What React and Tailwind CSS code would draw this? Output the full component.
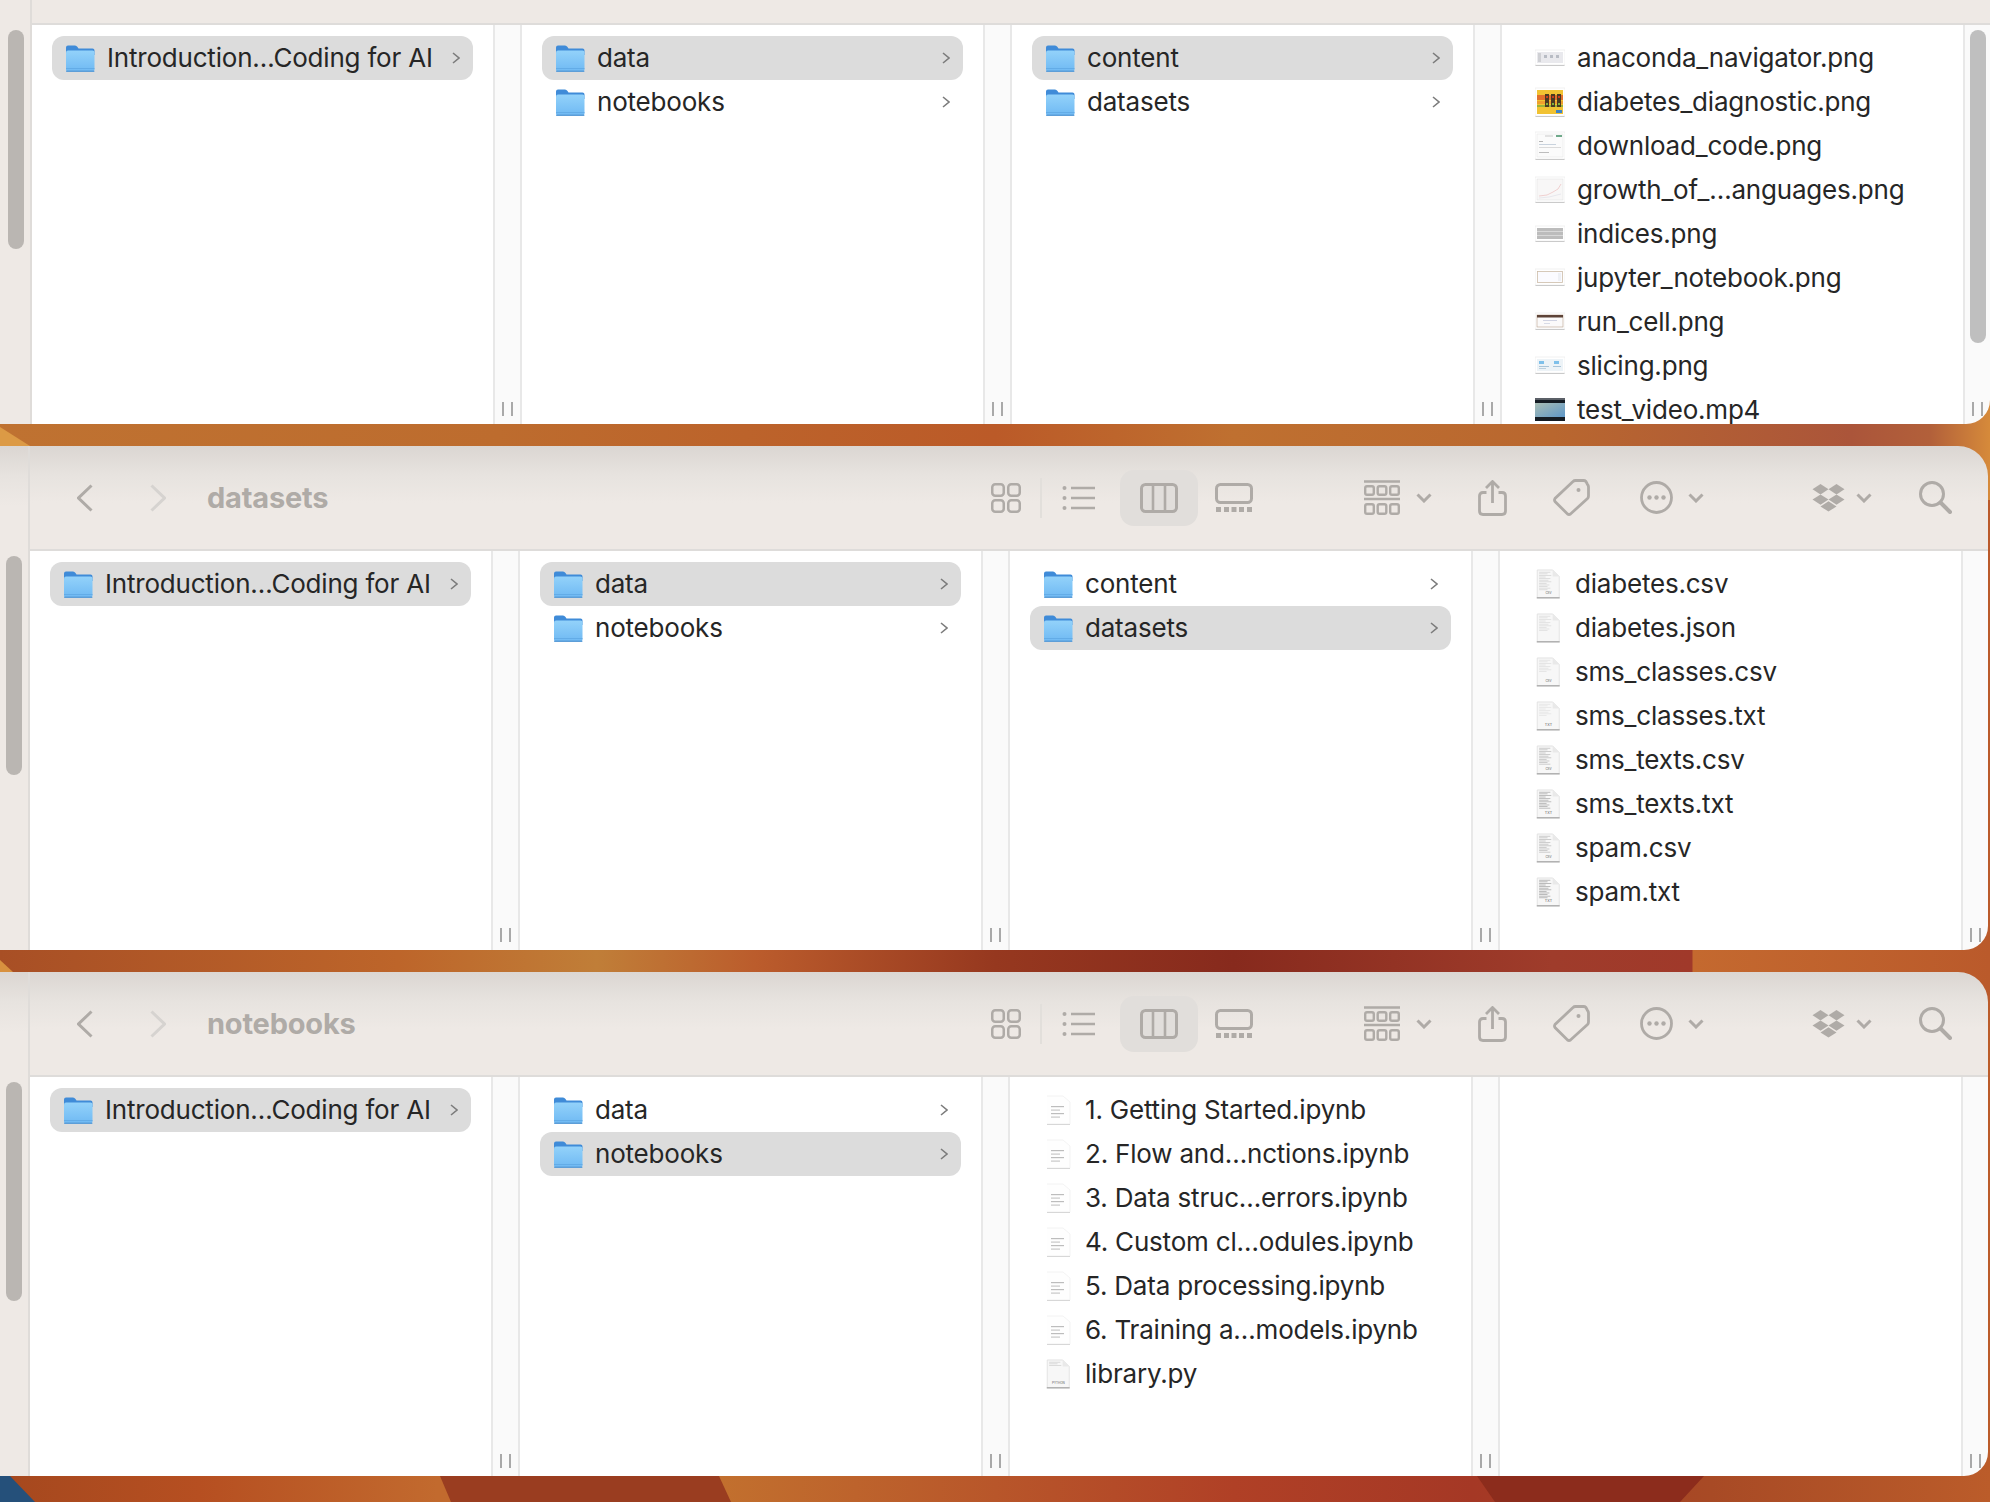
import React from "react";

const Ic = "#afaba7";

function Folder() {
  return (
    <svg width="30" height="30" viewBox="0 0 30 30" className="shrink-0">
      <defs>
        <linearGradient id="fb" x1="0" y1="0" x2="0" y2="1">
          <stop offset="0" stopColor="#93d2fa" />
          <stop offset="1" stopColor="#6fb9f3" />
        </linearGradient>
      </defs>
      <path d="M1 4.5 Q1 2.5 3 2.5 H10 Q11.5 2.5 12.5 4 L13.5 5.5 H27.5 Q29.5 5.5 29.5 7.5 V12 H1 Z" fill="#3f8bd8" />
      <rect x="1" y="7.5" width="28.5" height="21" rx="2" fill="url(#fb)" />
      <rect x="1" y="25" width="28.5" height="0.8" fill="#5fa8e4" />
      <rect x="1" y="27.6" width="28.5" height="1.4" rx="0.7" fill="#5d9ed8" />
    </svg>
  );
}

function Chevron() {
  return (
    <svg width="8" height="12" viewBox="0 0 8 12" className="shrink-0">
      <polyline points="1,1 7,6 1,11" fill="none" stroke="#7c7c7c" strokeWidth="1.6" />
    </svg>
  );
}

function Thumb({ y, h, children, border = "#ffffff" }) {
  return (
    <svg width="30" height="30" viewBox="0 0 30 30" className="shrink-0">
      <rect x="0.5" y={y + 1} width="29" height={h} fill="#a8a8a8" opacity="0.7" />
      <rect x="0" y={y} width="30" height={h} fill={border} stroke="#e4e4e4" strokeWidth="0.5" />
      {children}
    </svg>
  );
}

const thumbs = {
  anaconda: (
    <Thumb y={7} h={15}>
      <rect x="2" y="9" width="26" height="11" fill="#e9e9ed" />
      <rect x="3" y="10" width="3" height="9" fill="#cfd0d4" />
      <rect x="9" y="12" width="3" height="3" fill="#b8bcc4" />
      <rect x="15" y="12" width="3" height="3" fill="#b8bcc4" />
      <rect x="21" y="12" width="3" height="3" fill="#b8bcc4" />
    </Thumb>
  ),
  diabetes: (
    <Thumb y={1} h={28}>
      <rect x="2" y="3" width="26" height="24" fill="#f1c232" />
      <rect x="2" y="8" width="26" height="5" fill="#e2702c" />
      <rect x="2" y="14" width="26" height="3" fill="#ee9f2e" />
      <rect x="2" y="18" width="26" height="2" fill="#9bb33a" />
      <rect x="10" y="7" width="4" height="13" fill="#4a3a22" />
      <rect x="16" y="7" width="4" height="13" fill="#4a3a22" />
      <rect x="22" y="7" width="4" height="13" fill="#4a3a22" />
      <rect x="11" y="9" width="2" height="2" fill="#c93a22" />
      <rect x="17" y="9" width="2" height="2" fill="#c93a22" />
      <rect x="23" y="9" width="2" height="2" fill="#c93a22" />
      <rect x="11" y="16" width="2" height="2" fill="#7eb13e" />
      <rect x="17" y="16" width="2" height="2" fill="#7eb13e" />
      <rect x="23" y="16" width="2" height="2" fill="#7eb13e" />
      <rect x="21" y="23" width="6" height="3" fill="#3d83c9" />
    </Thumb>
  ),
  download: (
    <Thumb y={1} h={27}>
      <rect x="2" y="3" width="26" height="23" fill="#fbfbfb" stroke="#e3e3e3" strokeWidth="0.5" />
      <rect x="21" y="4" width="6" height="2" fill="#6fa98a" />
      <rect x="10" y="4.5" width="8" height="1" fill="#c9c9c9" />
      <rect x="4" y="10" width="4" height="1" fill="#b5b5b5" />
      <rect x="4" y="13" width="17" height="1" fill="#c9d3de" />
      <rect x="4" y="16" width="22" height="1" fill="#dadada" />
      <rect x="4" y="21" width="10" height="1" fill="#bdbdbd" />
    </Thumb>
  ),
  growth: (
    <Thumb y={2} h={25}>
      <rect x="2" y="4" width="26" height="21" fill="#f8f7f7" stroke="#dedede" strokeWidth="0.5" />
      <polyline points="4,21 12,20 18,17 23,14 26,9" fill="none" stroke="#eec5c5" strokeWidth="0.8" />
      <polyline points="4,23 14,22 26,19" fill="none" stroke="#e3e3ea" strokeWidth="0.8" />
    </Thumb>
  ),
  indices: (
    <Thumb y={7} h={15}>
      <rect x="2" y="9" width="26" height="11" fill="#bcbcbc" />
      <rect x="2" y="12" width="26" height="1" fill="#d8d8d8" />
      <rect x="2" y="16" width="26" height="1" fill="#d8d8d8" />
    </Thumb>
  ),
  jupyter: (
    <Thumb y={6} h={16}>
      <rect x="2.5" y="8.5" width="25" height="11" fill="#fbfbff" stroke="#cdbca8" strokeWidth="0.8" />
      <rect x="23" y="10" width="3" height="8" fill="#eef0f5" />
    </Thumb>
  ),
  run: (
    <Thumb y={6} h={16}>
      <rect x="2" y="8" width="26" height="12" fill="#fbfafa" stroke="#b9a08c" strokeWidth="0.6" />
      <rect x="2" y="8" width="26" height="2.5" fill="#5d4337" />
      <rect x="8" y="13" width="14" height="1" fill="#d0d3e2" />
      <rect x="9" y="16" width="6" height="1" fill="#d8dbe6" />
    </Thumb>
  ),
  slicing: (
    <Thumb y={6} h={16}>
      <rect x="2" y="8" width="26" height="12" fill="#edf3f7" />
      <rect x="4" y="10" width="5" height="3" fill="#7fc0ea" />
      <rect x="19" y="10" width="5" height="3" fill="#7fc0ea" />
      <rect x="4" y="15" width="10" height="1" fill="#a9c4d8" />
      <rect x="18" y="15" width="8" height="1" fill="#a9c4d8" />
      <rect x="4" y="17" width="7" height="1" fill="#bcd0de" />
    </Thumb>
  ),
  video: (
    <svg width="30" height="30" viewBox="0 0 30 30" className="shrink-0">
      <defs>
        <linearGradient id="vb" x1="0" y1="0" x2="1" y2="1">
          <stop offset="0" stopColor="#a9bdb4" />
          <stop offset="1" stopColor="#5e97c8" />
        </linearGradient>
      </defs>
      <rect x="0" y="3" width="30" height="23" fill="#151c24" />
      <rect x="0" y="8" width="30" height="14" fill="url(#vb)" />
      <rect x="0" y="3" width="30" height="2" fill="#5b6067" />
    </svg>
  ),
};

function Doc({ label, lines = 0, shade = "#c9c9c9", small = false }) {
  const rows = [];
  for (let i = 0; i < lines; i++) {
    const w = [12, 9, 13, 7, 12, 10, 13, 8, 11, 9][i % 10];
    rows.push(<rect key={i} x="5.5" y={3 + i * 1.7} width={w} height="0.9" fill={shade} />);
  }
  return (
    <svg width="30" height="30" viewBox="0 0 30 32" className="shrink-0">
      <path d="M3.5 1 H20 L27 8 V30.5 H3.5 Z" fill="#f7f7f7" stroke="#dcdcdc" strokeWidth="0.8" />
      <path d="M20 1 V8 H27 Z" fill="#e9e9e9" />
      <rect x="3" y="30.2" width="24.5" height="1.2" fill="#9c9c9c" />
      {rows}
      {label && (
        <text
          x="15.5"
          y="27"
          textAnchor="middle"
          fontSize={small ? "3.2" : "4"}
          fill="#5c5c5c"
          fontFamily="Inter, sans-serif"
        >
          {label}
        </text>
      )}
    </svg>
  );
}

function Notebook() {
  return (
    <svg width="30" height="30" viewBox="0 0 30 30" className="shrink-0">
      <path d="M4 1 H20 L27 7 V29 H4" fill="#fefefe" stroke="#f0f0f0" strokeWidth="0.8" />
      <rect x="4" y="29" width="23" height="0.8" fill="#cfcfcf" />
      <rect x="8" y="11" width="13" height="1.2" fill="#bdbdbd" />
      <rect x="8" y="14.5" width="9" height="1.2" fill="#c8c8c8" />
      <rect x="8" y="18" width="13" height="1.2" fill="#bdbdbd" />
      <rect x="8" y="21.5" width="9" height="1.2" fill="#c8c8c8" />
    </svg>
  );
}

function Row({ icon, label, selected, chevron }) {
  return (
    <div
      className={`h-[44px] w-[421px] pl-[13px] pr-[13px] flex items-center rounded-[12px] ${
        selected ? "bg-[#dcdcdc]" : ""
      }`}
    >
      {icon}
      <span className="ml-[12px] text-[26px] leading-[44px] text-[#262626] whitespace-nowrap tracking-[-0.2px]">{label}</span>
      {chevron && (
        <span className="ml-auto flex">
          <Chevron />
        </span>
      )}
    </div>
  );
}

function Handle({ last }) {
  return (
    <div
      className={`${
        last ? "flex-1 border-l-2" : "w-[29px] shrink-0 border-x-2"
      } border-[#e8e8e8] bg-[#fafafa] flex items-end justify-center pb-[8px] gap-[7px]`}
    >
      <div className="w-[2px] h-[14px] bg-[#a9a9a9]" />
      <div className="w-[2px] h-[14px] bg-[#a9a9a9]" />
    </div>
  );
}

function Column({ rows, last }) {
  return (
    <>
      <div className="w-[461px] shrink-0 bg-white pt-[11px] pl-[20px] overflow-hidden">
        {rows.map((r, i) => (
          <Row key={i} {...r} />
        ))}
      </div>
      <Handle last={last} />
    </>
  );
}

const S = (w, h, children, cls = "") => (
  <svg
    width={w}
    height={h}
    viewBox={`0 0 ${w} ${h}`}
    fill="none"
    stroke={Ic}
    strokeWidth="3"
    className={`shrink-0 ${cls}`}
  >
    {children}
  </svg>
);

const DownChev = (cls) =>
  S(16, 10, <polyline points="1.5,1.5 8,8 14.5,1.5" strokeWidth="3" />, cls);

function Toolbar({ title }) {
  return (
    <div className="h-[105px] shrink-0 border-b-2 border-[#dedcda] flex items-center pl-[47px] pr-[36px] bg-[linear-gradient(180deg,#dbd6d2_0%,#e7e3df_28%,#eee9e5_55%,#eee9e5_100%)]">
      {S(16, 28, <polyline points="14.5,1.5 1.5,14 14.5,26.5" />)}
      {S(16, 28, <polyline points="1.5,1.5 14.5,14 1.5,26.5" stroke="#d6d3d0" />, "ml-[57px]")}
      <span className="ml-[41px] text-[29px] font-bold text-[#afaba7] tracking-[-0.2px]">{title}</span>
      <div className="ml-auto flex items-center">
        {S(
          30,
          30,
          <g strokeWidth="2.5">
            <rect x="1.25" y="1.25" width="11.5" height="11.5" rx="3" />
            <rect x="17.25" y="1.25" width="11.5" height="11.5" rx="3" />
            <rect x="1.25" y="17.25" width="11.5" height="11.5" rx="3" />
            <rect x="17.25" y="17.25" width="11.5" height="11.5" rx="3" />
          </g>
        )}
        <div className="ml-[19px] w-[2px] h-[40px] bg-[#e2dfdb]" />
        {S(
          33,
          24,
          <g>
            <circle cx="2.5" cy="2" r="2" fill={Ic} stroke="none" />
            <circle cx="2.5" cy="12" r="2" fill={Ic} stroke="none" />
            <circle cx="2.5" cy="22" r="2" fill={Ic} stroke="none" />
            <path d="M9 2H33M9 12H33M9 22H33" strokeWidth="2.6" />
          </g>,
          "ml-[20px]"
        )}
        <div className="ml-[25px] w-[78px] h-[56px] rounded-[14px] bg-[#e1dedb] flex items-center justify-center">
          {S(
            38,
            30,
            <g>
              <rect x="1.5" y="1.5" width="35" height="27" rx="4" />
              <path d="M13 1.5V28.5M25 1.5V28.5" strokeWidth="2.6" />
            </g>
          )}
        </div>
        {S(
          38,
          29,
          <g>
            <rect x="1.5" y="1.5" width="35" height="18" rx="4" />
            <g fill={Ic} stroke="none">
              <rect x="1" y="24" width="5" height="5" />
              <rect x="9" y="24" width="5" height="5" />
              <rect x="16.5" y="24" width="5" height="5" />
              <rect x="24" y="24" width="5" height="5" />
              <rect x="32" y="24" width="5" height="5" />
            </g>
          </g>,
          "ml-[17px]"
        )}
        {S(
          36,
          35,
          <g strokeWidth="2.4">
            <path d="M0 1.5H36M0 19H36" />
            <rect x="1.2" y="6.2" width="8.6" height="8.6" rx="1.8" />
            <rect x="13.7" y="6.2" width="8.6" height="8.6" rx="1.8" />
            <rect x="26.2" y="6.2" width="8.6" height="8.6" rx="1.8" />
            <rect x="1.2" y="24.2" width="8.6" height="9.6" rx="1.8" />
            <rect x="13.7" y="24.2" width="8.6" height="9.6" rx="1.8" />
            <rect x="26.2" y="24.2" width="8.6" height="9.6" rx="1.8" />
          </g>,
          "ml-[111px]"
        )}
        {DownChev("ml-[16px]")}
        {S(
          29,
          36,
          <g strokeWidth="2.8">
            <path d="M8.5 12.5H5Q1.5 12.5 1.5 16V31Q1.5 34.5 5 34.5H24Q27.5 34.5 27.5 31V16Q27.5 12.5 24 12.5H20.5" />
            <path d="M14.5 23V1.5M8 8L14.5 1.5L21 8" />
          </g>,
          "ml-[46px]"
        )}
        {S(
          37,
          37,
          <g strokeWidth="2.8">
            <path d="M20 2.5Q21 1.5 22.5 1.5H30.5Q32 1.5 33 2.5L34.5 5.5Q35.5 6.5 35.5 8V17Q35.5 18.5 34.5 19.5L17.5 35Q16 36 14.5 35L2 22.5Q1 21 2 19.5Z" />
            <circle cx="25.5" cy="11" r="2" fill={Ic} stroke="none" />
          </g>,
          "ml-[46px]"
        )}
        {S(
          33,
          33,
          <g strokeWidth="2.8">
            <circle cx="16.5" cy="16.5" r="15" />
            <circle cx="9.5" cy="16.5" r="2.2" fill={Ic} stroke="none" />
            <circle cx="16.5" cy="16.5" r="2.2" fill={Ic} stroke="none" />
            <circle cx="23.5" cy="16.5" r="2.2" fill={Ic} stroke="none" />
          </g>,
          "ml-[50px]"
        )}
        {DownChev("ml-[15px]")}
        <svg width="33" height="28" viewBox="0 0 33 28" fill={Ic} className="ml-[108px] shrink-0">
          <path d="M8.5 0L16.5 5.2L8.5 10.4L0.5 5.2Z" />
          <path d="M24.5 0L32.5 5.2L24.5 10.4L16.5 5.2Z" />
          <path d="M8.5 10.4L16.5 15.6L8.5 20.8L0.5 15.6Z" />
          <path d="M24.5 10.4L32.5 15.6L24.5 20.8L16.5 15.6Z" />
          <path d="M16.5 17.2L24.5 22.4L16.5 27.6L8.5 22.4Z" />
        </svg>
        {DownChev("ml-[11px]")}
        {S(
          33,
          33,
          <g>
            <circle cx="13" cy="13" r="11.5" />
            <path d="M21.5 21.5L31 31" strokeWidth="4" strokeLinecap="round" />
          </g>,
          "ml-[47px]"
        )}
      </div>
    </div>
  );
}

const rootCol = [{ icon: <Folder />, label: "Introduction…Coding for AI", selected: true, chevron: true }];
const dataCol = (sel) => [
  { icon: <Folder />, label: "data", selected: sel === "data", chevron: true },
  { icon: <Folder />, label: "notebooks", selected: sel === "notebooks", chevron: true },
];
const subCol = (sel) => [
  { icon: <Folder />, label: "content", selected: sel === "content", chevron: true },
  { icon: <Folder />, label: "datasets", selected: sel === "datasets", chevron: true },
];

const contentFiles = [
  ["anaconda", "anaconda_navigator.png"],
  ["diabetes", "diabetes_diagnostic.png"],
  ["download", "download_code.png"],
  ["growth", "growth_of_…anguages.png"],
  ["indices", "indices.png"],
  ["jupyter", "jupyter_notebook.png"],
  ["run", "run_cell.png"],
  ["slicing", "slicing.png"],
  ["video", "test_video.mp4"],
].map(([k, label]) => ({ icon: thumbs[k], label }));

const dataFiles = [
  { icon: <Doc label="CSV" lines={12} shade="#d8d8d8" small />, label: "diabetes.csv" },
  { icon: <Doc lines={10} shade="#e0e0e0" />, label: "diabetes.json" },
  { icon: <Doc label="CSV" lines={8} shade="#e2e2e2" small />, label: "sms_classes.csv" },
  { icon: <Doc label="TXT" lines={8} shade="#e6e6e6" />, label: "sms_classes.txt" },
  { icon: <Doc label="CSV" lines={11} shade="#c4c4c4" small />, label: "sms_texts.csv" },
  { icon: <Doc label="TXT" lines={11} shade="#b4b4b4" />, label: "sms_texts.txt" },
  { icon: <Doc label="CSV" lines={11} shade="#c4c4c4" small />, label: "spam.csv" },
  { icon: <Doc label="TXT" lines={12} shade="#b0b0b0" />, label: "spam.txt" },
];

const notebooks = [
  "1. Getting Started.ipynb",
  "2. Flow and…nctions.ipynb",
  "3. Data struc…errors.ipynb",
  "4. Custom cl…odules.ipynb",
  "5. Data processing.ipynb",
  "6. Training a…models.ipynb",
].map((label) => ({ icon: <Notebook />, label }));
notebooks.push({ icon: <Doc label="PYTHON" lines={3} shade="#d6d6d6" small />, label: "library.py" });

function Window({ first, title, columns, cls }) {
  return (
    <div className={`flex overflow-hidden rounded-br-[24px] ${cls}`}>
      <div
        className={`${
          first ? "w-[32px] pl-[8px] pt-[30px]" : "w-[30px] pl-[6px] pt-[110px] bg-[linear-gradient(180deg,#dbd6d2_0px,#e7e3df_30px,#eee9e5_60px)]"
        } shrink-0 bg-[#eee9e5] border-r-2 border-[#dfdcd9]`}
      >
        <div className="w-[16px] h-[219px] rounded-full bg-[#bab6b2]" />
      </div>
      <div className="flex-1 flex flex-col min-w-0">
        {first ? (
          <div className="h-[25px] shrink-0 border-b-2 border-[#dedcda] bg-[#eee9e5]" />
        ) : (
          <Toolbar title={title} />
        )}
        <div className="flex flex-1 min-h-0">
          {columns.map((rows, i) => (
            <Column key={i} rows={rows} last={i === 3} />
          ))}
        </div>
      </div>
    </div>
  );
}

function Wallpaper() {
  return (
    <svg className="absolute inset-0" width="1990" height="1502" viewBox="0 0 1990 1502">
      <defs>
        <linearGradient id="s1">
          <stop offset="0" stopColor="#bf7231" />
          <stop offset="0.25" stopColor="#bd6c2e" />
          <stop offset="0.5" stopColor="#bb5a28" />
          <stop offset="0.62" stopColor="#bf7030" />
          <stop offset="0.78" stopColor="#b9672f" />
          <stop offset="0.93" stopColor="#ab553a" />
          <stop offset="0.97" stopColor="#b2603a" />
          <stop offset="1" stopColor="#d68a3a" />
        </linearGradient>
        <linearGradient id="s2">
          <stop offset="0" stopColor="#a84f25" />
          <stop offset="0.2" stopColor="#bd652a" />
          <stop offset="0.3" stopColor="#c07e38" />
          <stop offset="0.38" stopColor="#bb5c2c" />
          <stop offset="0.5" stopColor="#96381f" />
          <stop offset="0.62" stopColor="#872a1d" />
          <stop offset="0.78" stopColor="#9f3c2b" />
          <stop offset="0.85" stopColor="#a0392a" />
          <stop offset="0.851" stopColor="#c4692f" />
          <stop offset="1" stopColor="#ba5a2b" />
        </linearGradient>
        <linearGradient id="s3">
          <stop offset="0" stopColor="#a5481e" />
          <stop offset="0.1" stopColor="#b64f21" />
          <stop offset="0.22" stopColor="#c26a2e" />
          <stop offset="0.36" stopColor="#c2702e" />
          <stop offset="0.5" stopColor="#b8562a" />
          <stop offset="0.62" stopColor="#b04026" />
          <stop offset="0.74" stopColor="#a53825" />
          <stop offset="0.86" stopColor="#a84a25" />
          <stop offset="1" stopColor="#bb5c2a" />
        </linearGradient>
      </defs>
      <rect x="0" y="0" width="1990" height="500" fill="url(#s1)" />
      <polygon points="0,427 30,446 0,446" fill="#dc9a45" />
      <rect x="0" y="500" width="1990" height="500" fill="url(#s2)" />
      <polygon points="0,960 13,972 0,972" fill="#d8913f" />
      <rect x="0" y="1000" width="1990" height="502" fill="url(#s3)" />
      <polygon points="0,1476 10,1476 35,1502 0,1502" fill="#25507a" />
      <polygon points="440,1476 719,1476 731,1502 451,1502" fill="#9a3d20" />
      <polygon points="1477,1476 1704,1476 1680,1502 1495,1502" fill="#8c2c1c" />
    </svg>
  );
}

export default function App() {
  return (
    <div className="relative w-[1990px] h-[1502px] overflow-hidden font-['Inter',sans-serif]">
      <Wallpaper />
      <div className="relative flex flex-col">
        <div className="relative">
          <Window
            first
            cls="w-[1990px] h-[424px]"
            columns={[rootCol, dataCol("data"), subCol("content"), contentFiles]}
          />
          <div className="absolute left-[1970px] top-[30px] w-[16px] h-[313px] rounded-full bg-[#bfbfbf]" />
        </div>
        <Window
          title="datasets"
          cls="w-[1988px] h-[504px] mt-[22px] rounded-tr-[30px]"
          columns={[rootCol, dataCol("data"), subCol("datasets"), dataFiles]}
        />
        <Window
          title="notebooks"
          cls="w-[1988px] h-[504px] mt-[22px] rounded-tr-[30px]"
          columns={[rootCol, dataCol("notebooks"), notebooks, []]}
        />
      </div>
    </div>
  );
}
